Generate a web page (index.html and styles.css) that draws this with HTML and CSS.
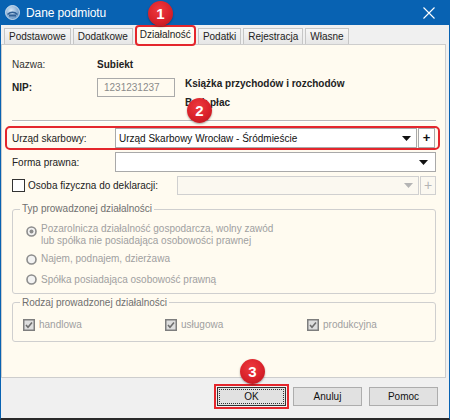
FILE: index.html
```html
<!DOCTYPE html>
<html>
<head>
<meta charset="utf-8">
<link rel="stylesheet" href="styles.css">
</head>
<body>
<div class="window">
  <div class="titlebar">
    <svg class="appicon" width="15" height="15" viewBox="0 0 15 15">
      <defs>
        <radialGradient id="g1" cx="0.4" cy="0.35" r="0.7">
          <stop offset="0" stop-color="#d6e6f5"/>
          <stop offset="1" stop-color="#5b8dc0"/>
        </radialGradient>
      </defs>
      <circle cx="7.5" cy="7.5" r="7" fill="url(#g1)" stroke="#e8f0f8" stroke-width="0.8"/>
      <path d="M2.5 9.5 Q7.5 5 12.5 9.5" fill="none" stroke="#2f5f95" stroke-width="1.6"/>
      <rect x="4" y="9.5" width="7" height="2" fill="#2f5f95"/>
    </svg>
    <span class="title">Dane podmiotu</span>
    <svg class="close" width="12" height="12" viewBox="0 0 12 12">
      <path d="M0.5 0.5 L11.5 11.5 M11.5 0.5 L0.5 11.5" stroke="#ffffff" stroke-width="1.1"/>
    </svg>
  </div>

  <div class="tabs">
    <div class="tab">Podstawowe</div>
    <div class="tab">Dodatkowe</div>
    <div class="tab active">Działalność</div>
    <div class="tab">Podatki</div>
    <div class="tab">Rejestracja</div>
    <div class="tab">Własne</div>
  </div>

  <div class="page">
    <div class="r-nazwa">
      <span class="lbl">Nazwa:</span>
      <span class="b">Subiekt</span>
    </div>
    <div class="r-nip">
      <span class="lbl b nip-lbl">NIP:</span>
      <div class="nip">1231231237</div>
      <div class="info">
        <div>Książka przychodów i rozchodów</div>
        <div>Brak płac</div>
      </div>
    </div>
    <div class="sep"></div>

    <div class="hl">
      <span class="lbl2">Urząd skarbowy:</span>
      <div class="select us">
        <span class="val">Urząd Skarbowy Wrocław - Śródmieście</span>
        <svg class="arrow" width="9" height="5" viewBox="0 0 9 5"><path d="M0 0 H9 L4.5 5 Z" fill="#111"/></svg>
      </div>
      <div class="plus">+</div>
    </div>

    <div class="frow">
      <span class="lbl2">Forma prawna:</span>
      <div class="select grow">
        <span class="val"></span>
        <svg class="arrow" width="9" height="5" viewBox="0 0 9 5"><path d="M0 0 H9 L4.5 5 Z" fill="#111"/></svg>
      </div>
    </div>

    <div class="orow">
      <span class="cb"></span>
      <span class="olbl">Osoba fizyczna do deklaracji:</span>
      <div class="select dis">
        <span class="val"></span>
        <svg class="arrow" width="9" height="5" viewBox="0 0 9 5"><path d="M0 0 H9 L4.5 5 Z" fill="#b4b4b4"/></svg>
      </div>
      <div class="plus dis">+</div>
    </div>

    <fieldset class="grp g1">
      <legend>Typ prowadzonej działalności</legend>
      <div class="radio first">
        <svg class="rd" width="11" height="11" viewBox="0 0 11 11"><circle cx="5.5" cy="5.5" r="4.5" fill="#f2f2f2" stroke="#8c8c8c" stroke-width="1.6"/><circle cx="5.5" cy="5.5" r="2" fill="#8c8c8c"/></svg>
        <span>Pozarolnicza działalność gospodarcza, wolny zawód<br>lub spółka nie posiadająca osobowości prawnej</span>
      </div>
      <div class="radio">
        <svg class="rd" width="11" height="11" viewBox="0 0 11 11"><circle cx="5.5" cy="5.5" r="4.5" fill="#f2f2f2" stroke="#8c8c8c" stroke-width="1.6"/></svg>
        <span>Najem, podnajem, dzierżawa</span>
      </div>
      <div class="radio">
        <svg class="rd" width="11" height="11" viewBox="0 0 11 11"><circle cx="5.5" cy="5.5" r="4.5" fill="#f2f2f2" stroke="#8c8c8c" stroke-width="1.6"/></svg>
        <span>Spółka posiadająca osobowość prawną</span>
      </div>
    </fieldset>

    <fieldset class="grp g2">
      <legend>Rodzaj prowadzonej działalności</legend>
      <div class="checks">
        <div class="chk">
          <svg width="12" height="12" viewBox="0 0 12 12"><rect x="0.75" y="0.75" width="10.5" height="10.5" fill="#dedede" stroke="#7e7e7e" stroke-width="1.5"/><path d="M3 6 L5 8.2 L9 3.6" fill="none" stroke="#6e6e6e" stroke-width="1.6"/></svg>
          <span>handlowa</span>
        </div>
        <div class="chk">
          <svg width="12" height="12" viewBox="0 0 12 12"><rect x="0.75" y="0.75" width="10.5" height="10.5" fill="#dedede" stroke="#7e7e7e" stroke-width="1.5"/><path d="M3 6 L5 8.2 L9 3.6" fill="none" stroke="#6e6e6e" stroke-width="1.6"/></svg>
          <span>usługowa</span>
        </div>
        <div class="chk">
          <svg width="12" height="12" viewBox="0 0 12 12"><rect x="0.75" y="0.75" width="10.5" height="10.5" fill="#dedede" stroke="#7e7e7e" stroke-width="1.5"/><path d="M3 6 L5 8.2 L9 3.6" fill="none" stroke="#6e6e6e" stroke-width="1.6"/></svg>
          <span>produkcyjna</span>
        </div>
      </div>
    </fieldset>
  </div>

  <div class="footer">
    <div class="btn ok"><span class="focus">OK</span></div>
    <div class="btn">Anuluj</div>
    <div class="btn">Pomoc</div>
  </div>

  <div class="badge b1">1</div>
  <div class="badge b2">2</div>
  <div class="badge b3">3</div>
</div>
</body>
</html>
```

FILE: styles.css
```css
* { box-sizing: border-box; }
html, body { margin: 0; padding: 0; }
body {
  width: 450px;
  height: 420px;
  overflow: hidden;
  font-family: "Liberation Sans", Arial, sans-serif;
  font-size: 10px;
  color: #222;
}
.window {
  position: relative;
  width: 450px;
  height: 420px;
  background: #f0f0f0;
  border-left: 1px solid #0862b2;
  border-right: 1px solid #0862b2;
  border-bottom: 2px solid #2a2a2a;
  display: flex;
  flex-direction: column;
}
.titlebar {
  height: 25px;
  flex: none;
  background: #0862b2;
  display: flex;
  align-items: center;
  padding-left: 4px;
  color: #fff;
}
.appicon { flex: none; }
.title {
  font-size: 12px;
  margin-left: 6px;
  letter-spacing: -0.1px;
}
.close { margin-left: auto; margin-right: 14px; }

.tabs {
  height: 19px;
  flex: none;
  display: flex;
  align-items: flex-end;
  gap: 2px;
  padding-left: 3px;
  position: relative;
  z-index: 2;
}
.tab {
  height: 16px;
  padding: 0 4px;
  border: 1px solid #c6c6c6;
  border-bottom: none;
  background: linear-gradient(#f6f6f6, #e6e6e6);
  line-height: 15px;
  color: #222;
}
.tab.active {
  height: 21px;
  margin-bottom: -2px;
  padding: 0 3px;
  background: #fffbf0;
  border: 2px solid #e4262c;
  border-radius: 4px;
  line-height: 16px;
}

.page {
  flex: 1;
  background: #fffbf0;
  border: 1px solid #cdcdcd;
  margin-right: 3px;
  padding: 0 9px 0 10px;
  position: relative;
  z-index: 1;
}
.b { font-weight: bold; }
.lbl { width: 85px; color: #333; flex: none; }
.r-nazwa {
  display: flex;
  align-items: center;
  height: 16px;
  margin-top: 11px;
}
.r-nip {
  display: flex;
  align-items: flex-start;
  margin-top: 6px;
}
.nip-lbl { line-height: 19px; color: #222; }
.nip {
  width: 78px;
  height: 19px;
  border: 1px solid #aaaaaa;
  background: #fffbf0;
  color: #8a8a8a;
  padding-left: 6px;
  line-height: 17px;
  flex: none;
}
.info {
  margin-left: 10px;
  margin-top: -4px;
  line-height: 19px;
  font-weight: bold;
  color: #222;
}
.sep {
  margin-top: 8px;
  height: 2px;
  border-top: 1px solid #b8b8b8;
  border-bottom: 1px solid #ffffff;
}

.lbl2 { width: 103px; flex: none; color: #222; }
.hl {
  margin: 4px -4px 0 -7px;
  height: 24px;
  border: 2px solid #e4262c;
  border-radius: 5px;
  display: flex;
  align-items: center;
  padding: 0 3px 0 5px;
}
.select {
  height: 20px;
  border: 1px solid #a9a9a9;
  background: #fff;
  display: flex;
  align-items: center;
  padding: 0 5px 0 3px;
  color: #111;
}
.select .arrow { margin-left: auto; flex: none; }
.select.us { width: 303px; }
.select.grow { flex: 1; padding-right: 7px; }
.plus {
  width: 17px;
  height: 20px;
  margin-left: 1px;
  border: 1px solid #a9a9a9;
  background: #fff;
  text-align: center;
  font-weight: bold;
  font-size: 13px;
  line-height: 17px;
  color: #111;
}
.frow {
  display: flex;
  align-items: center;
  height: 20px;
  margin-top: 2px;
}
.orow {
  display: flex;
  align-items: center;
  height: 19px;
  margin-top: 4px;
}
.cb {
  width: 13px;
  height: 13px;
  border: 1px solid #333;
  background: #fff;
  flex: none;
}
.olbl { margin-left: 3px; color: #222; }
.select.dis {
  margin-left: auto;
  width: 242px;
  height: 19px;
  border-color: #d0d0d0;
  background: #fbf8f0;
}
.plus.dis {
  width: 16px;
  height: 19px;
  border-color: #d0d0d0;
  background: #fbf8f0;
  color: #b4b4b4;
  font-weight: normal;
  font-size: 14px;
  line-height: 16px;
}

.grp {
  margin: 0;
  border: 1px solid #cfcfcf;
  border-radius: 3px;
  min-width: 0;
}
.grp legend {
  padding: 0 2px;
  line-height: 12px;
  color: #6f6f6f;
}
.g1 {
  margin-top: 8px;
  padding: 8px 0 7px 13px;
}
.g1 legend { margin-left: -6px; }
.radio {
  display: flex;
  align-items: flex-start;
  line-height: 12px;
  color: #a0a0a0;
  margin-top: 8.5px;
}
.radio.first { margin-top: 0; }
.radio .rd { flex: none; margin-right: 4px; margin-top: 0.5px; }
.radio.first .rd { margin-top: 3px; }
.radio + .radio { }
.radio.first + .radio { margin-top: 6px; }

.g2 {
  margin-top: 3px;
  padding: 10px 0 10px 10px;
}
.g2 legend { margin-left: -3px; }
.checks {
  display: grid;
  grid-template-columns: 142px 142px 142px;
  height: 12px;
}
.chk {
  display: flex;
  align-items: center;
  color: #a0a0a0;
  line-height: 12px;
}
.chk svg { flex: none; margin-right: 4px; }

.footer {
  height: 40px;
  flex: none;
  display: flex;
  justify-content: flex-end;
  align-items: flex-start;
  gap: 7px;
  padding: 9px 11px 0 0;
}
.btn {
  width: 69px;
  height: 19px;
  border: 1px solid #adadad;
  background: #e1e1e1;
  text-align: center;
  line-height: 17px;
  color: #111;
}
.btn.ok {
  outline: 2px solid #e4262c;
  outline-offset: 1px;
  border-color: #333;
  padding: 1px;
}
.btn.ok .focus {
  display: block;
  height: 15px;
  line-height: 14px;
  border: 1px dotted #333;
}

.badge {
  position: absolute;
  width: 25px;
  height: 25px;
  border-radius: 50%;
  background: radial-gradient(circle at 45% 35%, #ee3a3f 0%, #d9222a 55%, #b3141c 100%);
  color: #fff;
  font-weight: bold;
  font-size: 15px;
  line-height: 25px;
  text-align: center;
  box-shadow: 0 1px 2px rgba(0,0,0,0.35);
  z-index: 5;
}
.b1 { left: 147px; top: 1px; }
.b2 { left: 186px; top: 98px; }
.b3 { left: 239px; top: 359px; }
```
